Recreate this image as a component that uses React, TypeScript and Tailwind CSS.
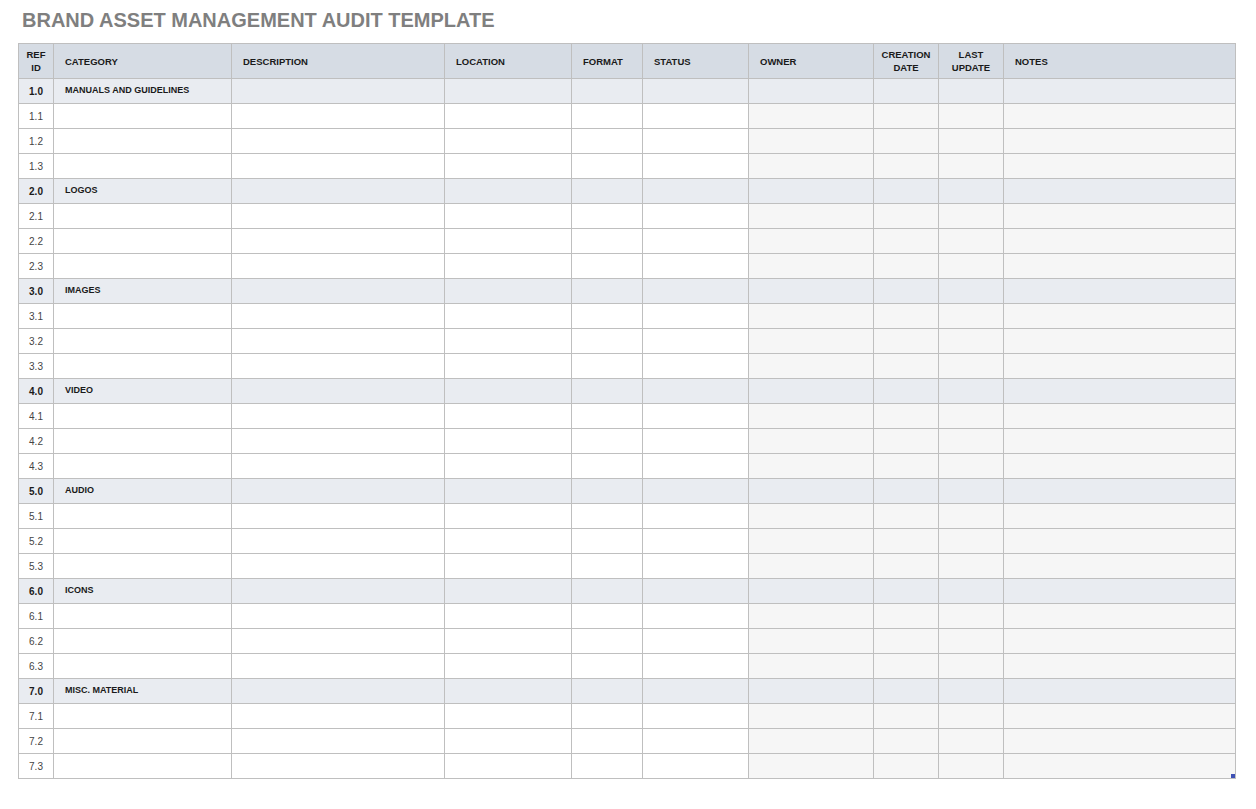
import React from "react";

const sections = [
  { id: "1.0", name: "MANUALS AND GUIDELINES" },
  { id: "2.0", name: "LOGOS" },
  { id: "3.0", name: "IMAGES" },
  { id: "4.0", name: "VIDEO" },
  { id: "5.0", name: "AUDIO" },
  { id: "6.0", name: "ICONS" },
  { id: "7.0", name: "MISC. MATERIAL" },
];

const headers: { label: React.ReactNode; center?: boolean }[] = [
  { label: <>REF<br />ID</>, center: true },
  { label: "CATEGORY" },
  { label: "DESCRIPTION" },
  { label: "LOCATION" },
  { label: "FORMAT" },
  { label: "STATUS" },
  { label: "OWNER" },
  { label: <>CREATION<br />DATE</>, center: true },
  { label: <>LAST<br />UPDATE</>, center: true },
  { label: "NOTES" },
];

export default function App() {
  const rows: React.ReactNode[] = [];
  sections.forEach((s, si) => {
    rows.push(
      <React.Fragment key={s.id}>
        <div className="bg-[#e9ecf1] flex items-center justify-center text-[10px] font-bold text-[#1a1a1a]">{s.id}</div>
        <div className="bg-[#e9ecf1] flex items-center pl-[11px] text-[9px] font-bold text-[#1a1a1a]">{s.name}</div>
        {Array.from({ length: 8 }).map((_, i) => (
          <div key={i} className="bg-[#e9ecf1]" />
        ))}
      </React.Fragment>
    );
    [1, 2, 3].forEach((n) => {
      rows.push(
        <React.Fragment key={`${si}-${n}`}>
          <div className="bg-white flex items-center justify-center text-[10px] text-[#444]">{`${si + 1}.${n}`}</div>
          {Array.from({ length: 5 }).map((_, i) => (
            <div key={i} className="bg-white" />
          ))}
          {Array.from({ length: 4 }).map((_, i) => (
            <div key={`g${i}`} className="bg-[#f6f6f6]" />
          ))}
        </React.Fragment>
      );
    });
  });

  return (
    <div className="w-[1256px] h-[809px] bg-white" style={{ fontFamily: '"Liberation Sans", Arial, sans-serif' }}>
      <div className="h-[43px] pl-[22px] pt-[10px]">
        <h1 className="text-[20px] leading-none font-bold text-[#7f7f7f]">BRAND ASSET MANAGEMENT AUDIT TEMPLATE</h1>
      </div>
      <div className="ml-[18px] w-[1218px] relative">
        <div className="grid grid-cols-[34px_177px_212px_126px_70px_105px_124px_64px_64px_231px] grid-rows-[34px] auto-rows-[24px] gap-px bg-[#bfbfbf] border border-[#bfbfbf]">
          {headers.map((h, i) => (
            <div
              key={i}
              className={`bg-[#d6dce4] flex items-center text-[9.5px] font-bold leading-[13px] text-[#1a1a1a] ${h.center ? "justify-center text-center" : "pl-[11px]"}`}
            >
              <span>{h.label}</span>
            </div>
          ))}
          {rows}
        </div>
        <div className="absolute right-[1px] bottom-[1px] w-[4px] h-[4px] bg-[#3f51b5]" />
      </div>
    </div>
  );
}
